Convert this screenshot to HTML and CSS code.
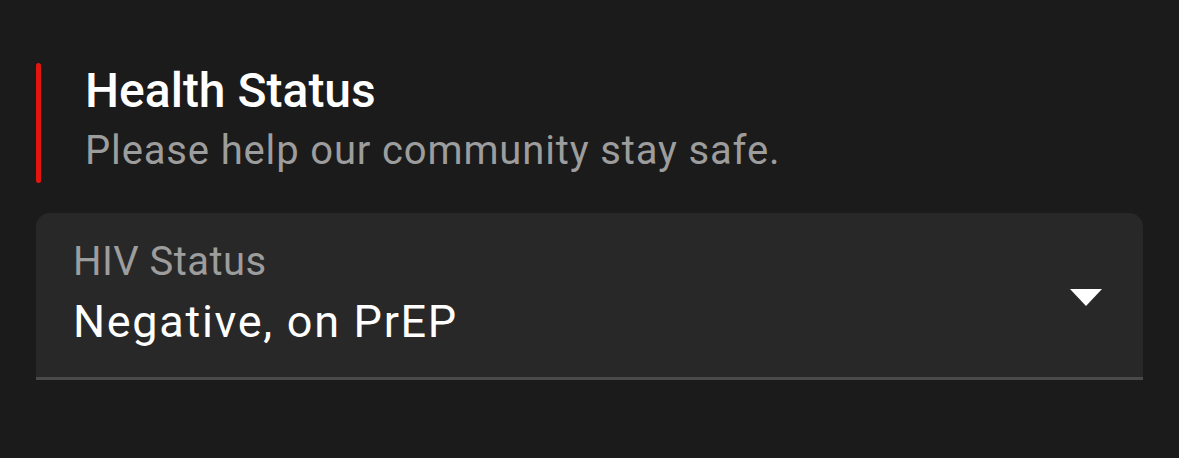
FILE: index.html
```html
<!DOCTYPE html>
<html lang="en">
<head>
<meta charset="utf-8">
<title>Health Status</title>
<link rel="stylesheet" href="styles.css">
</head>
<body>
<main class="page">
  <section class="section-header">
    <div class="accent"></div>
    <div class="header-texts">
      <h2 class="title">Health Status</h2>
      <p class="subtitle">Please help our community stay safe.</p>
    </div>
  </section>
  <div class="field">
    <div class="field-texts">
      <div class="field-label">HIV Status</div>
      <div class="field-value">Negative, on PrEP</div>
    </div>
    <svg class="arrow" width="32" height="17" viewBox="0 0 32 17" aria-hidden="true">
      <path d="M0 0 H32 L16 17 Z" fill="#ffffff"/>
    </svg>
  </div>
</main>
</body>
</html>
```
FILE: styles.css
```css
html, body {
  margin: 0;
  padding: 0;
  background: #1b1b1b;
}
body {
  font-family: Roboto, "Noto Sans", "Liberation Sans", sans-serif;
  color: #ffffff;
}
.page {
  padding: 63px 36px 0 36px;
}
.section-header {
  display: flex;
  align-items: stretch;
  gap: 44px;
}
.accent {
  width: 5px;
  border-radius: 3px;
  background: #e3160f;
}
.header-texts {
  padding-bottom: 2px;
}
.title {
  margin: 0;
  font-size: 48px;
  line-height: 56px;
  font-weight: 500;
  color: #ffffff;
}
.subtitle {
  margin: 2px 0 0 0;
  font-size: 40px;
  line-height: 60px;
  font-weight: 400;
  letter-spacing: 0.85px;
  color: #9d9d9d;
}
.field {
  margin-top: 30px;
  display: flex;
  align-items: center;
  justify-content: space-between;
  background: #282828;
  border-radius: 14px 14px 0 0;
  border-bottom: 3px solid #4a4a4a;
  padding: 25px 41px 27px 37px;
}
.field-label {
  font-size: 40px;
  line-height: 48px;
  letter-spacing: 0.45px;
  color: #9d9d9d;
}
.field-value {
  margin-top: 8px;
  font-size: 45px;
  line-height: 56px;
  letter-spacing: 1.7px;
  color: #ffffff;
}
.arrow {
  display: block;
  margin-top: 6px;
}
```
